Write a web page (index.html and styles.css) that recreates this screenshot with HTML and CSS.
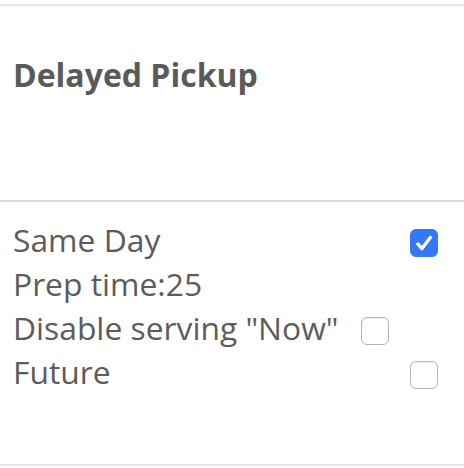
FILE: index.html
```html
<!DOCTYPE html>
<html>
<head>
<meta charset="utf-8">
<link rel="stylesheet" href="styles.css">
</head>
<body>
<div class="page">
  <section class="header">
    <h2 class="title">Delayed Pickup</h2>
  </section>
  <section class="options">
    <div class="row spread">
      <span>Same Day</span>
      <span class="box checked"><svg viewBox="0 0 28 28" width="28" height="28"><path d="M7.3 15 L11.8 20 L20.8 8" fill="none" stroke="#fff" stroke-width="3.6" stroke-linecap="round" stroke-linejoin="round"/></svg></span>
    </div>
    <div class="row">
      <span>Prep time:25</span>
    </div>
    <div class="row inline">
      <span>Disable serving "Now"</span>
      <span class="box"></span>
    </div>
    <div class="row spread">
      <span>Future</span>
      <span class="box"></span>
    </div>
  </section>
</div>
</body>
</html>
```
FILE: styles.css
```css
html, body {
  margin: 0;
  padding: 0;
  background: #fff;
}
.page {
  padding-top: 4px;
  font-family: "Open Sans", "Noto Sans", sans-serif;
  color: #5c5c5c;
}
.header {
  border-top: 2px solid #e6e7ea;
  border-bottom: 2px solid #dcdcdc;
  height: 194px;
  box-sizing: content-box;
  padding: 0 13px;
}
.title {
  margin: 50px 0 0;
  font-size: 32px;
  line-height: 38px;
  font-weight: 700;
  color: #5a5a5a;
}
.options {
  border-bottom: 2px solid #e4e5e8;
  padding: 16px 26px 70px 13px;
  font-size: 31.8px;
  line-height: 44px;
}
.row {
  display: flex;
  align-items: center;
  height: 44px;
}
.row.spread {
  justify-content: space-between;
}
.row.inline {
  gap: 22px;
}
.box {
  width: 28px;
  height: 28px;
  box-sizing: border-box;
  border: 1px solid #b4b4b4;
  border-radius: 6px;
  background: #fff;
  margin-top: 6px;
  display: flex;
  align-items: center;
  justify-content: center;
  box-shadow: inset 0 1px 1px rgba(0,0,0,0.05);
}
.box.checked {
  background: #3478f6;
  border-color: #3478f6;
  box-shadow: none;
}
.box svg {
  display: block;
}
```
